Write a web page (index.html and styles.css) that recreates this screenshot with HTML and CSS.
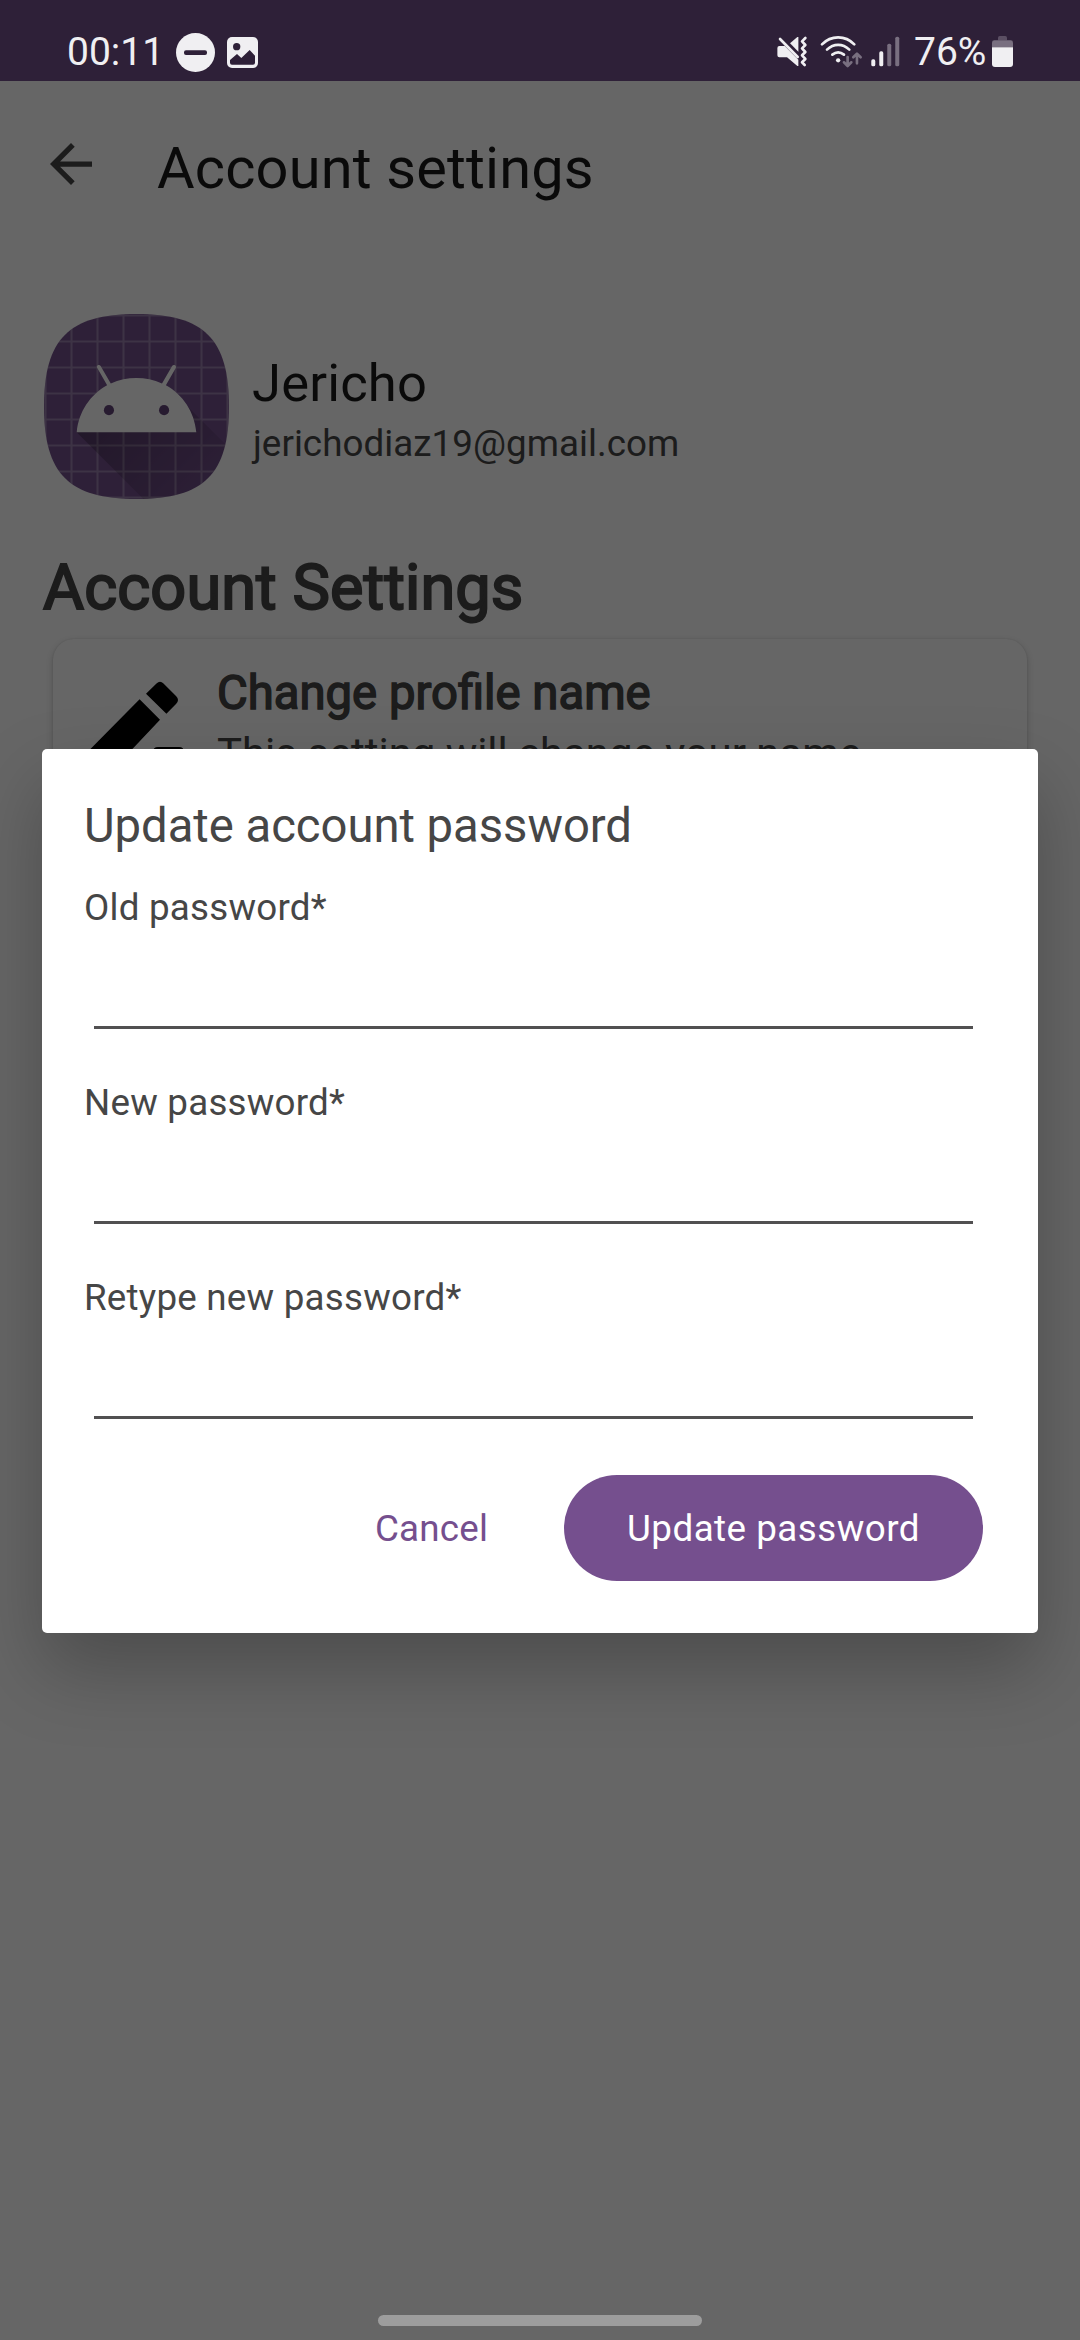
FILE: index.html
```html
<!DOCTYPE html>
<html lang="en">
<head>
<meta charset="utf-8">
<title>Account settings</title>
<link rel="stylesheet" href="styles.css">
</head>
<body>
<div class="phone">
  <header class="status-bar">
    <span class="clock">00:11</span>
    <svg class="icon-dnd" viewBox="0 0 39 39"><circle cx="19.5" cy="19.5" r="19.5" fill="#f0eff2"/><rect x="8" y="17.3" width="23" height="4.6" rx="2" fill="#2e2038"/></svg>
    <svg class="icon-image" viewBox="0 0 93 93"><rect width="93" height="93" rx="15" fill="#f0eff2"/><circle cx="29" cy="29" r="11" fill="#2e2038"/><path d="M9 69L30 51L43 63L68 39L84 56V77Q84 83 78 83H15Q9 83 9 77Z" fill="#2e2038"/></svg>
    <svg class="icons-signal" viewBox="110 105 370 100">
      <g fill="#f0eff2">
        <path d="M117 138H133L174 179V198H171L140 172H117Q111 172 111 166V144Q111 138 117 138Z"/>
        <path d="M149 130L171 111H174V155Z"/>
        <circle cx="293.500" cy="181" r="6.500"/>
        <rect x="393" y="178" width="12" height="21" rx="5"/>
        <rect x="417" y="154" width="12" height="45" rx="5"/>
      </g>
      <g fill="none" stroke="#f0eff2" stroke-linecap="round" stroke-width="8">
        <path d="M119 117L172 171"/>
        <path d="M195 114L185 124L195 135L185 145L195 156L185 166L195 177L185 187L193 195" stroke-linejoin="round"/>
        <path d="M245 133C272 105 315 105 342 133M260 149C280 130 307 130 327 149M276 164C287 155 300 155 311 164"/>
      </g>
      <g fill="#796f80"><rect x="441" y="131" width="12" height="68" rx="5"/><rect x="465" y="110" width="12" height="89" rx="5"/></g>
      <path d="M322 171V197M311 187L322 198L333 187M350 190V162M339 172L350 161L361 172" fill="none" stroke="#796f80" stroke-width="8" stroke-linecap="round" stroke-linejoin="round"/>
    </svg>
    <span class="battery-level">76%</span>
    <svg class="icon-battery" viewBox="0 0 63 93"><path d="M18 5Q18 0 23 0H40Q45 0 45 5V13H18Z" fill="#5b4f63"/><path d="M0 34V20Q0 13 7 13H56Q63 13 63 20V34Z" fill="#796f80"/><path d="M0 34H63V84Q63 93 54 93H9Q0 93 0 84Z" fill="#f0eff2"/></svg>
  </header>

  <main class="screen">
    <div class="app-bar">
      <svg class="icon-back" viewBox="4 4 16 16"><path d="M20 11H7.830L13.420 5.410L12 4L4 12L12 20L13.410 18.590L7.830 13H20Z" fill="#464646"/></svg>
      <h1 class="app-title">Account settings</h1>
    </div>
    <section class="profile">
      <svg class="avatar" viewBox="18.420 18.420 71.150 71.150">
        <defs>
          <clipPath id="squircle"><path d="M18.420 54C18.420 28 28 18.420 54 18.420S89.570 28 89.570 54S80 89.570 54 89.570S18.420 80 18.420 54Z"/></clipPath>
          <linearGradient id="shade" gradientUnits="userSpaceOnUse" x1="42.900" y1="49.600" x2="85.800" y2="92.500"><stop offset="0" stop-opacity=".27"/><stop offset="1" stop-opacity="0"/></linearGradient>
        </defs>
        <g clip-path="url(#squircle)">
          <rect x="18" y="18" width="72" height="72" fill="#73508c"/>
          <path d="M19 18V90M29 18V90M39 18V90M49 18V90M59 18V90M69 18V90M79 18V90M89 18V90M18 19H90M18 29H90M18 39H90M18 49H90M18 59H90M18 69H90M18 79H90M18 89H90" stroke="#fff" stroke-opacity=".28" stroke-width=".8"/>
          <path d="M31 63.928s6.400-11 12.100-13.100c7.200-2.600 26-1.400 26-1.400l38.100 38.100L107 108.928l-32-1Z" fill="url(#shade)"/>
          <path d="M65.300 45.828l3.800-6.600c.2-.4.1-.9-.3-1.100-.4-.2-.9-.1-1.100.3l-3.900 6.700c-6.300-2.800-13.400-2.800-19.700 0l-3.900-6.700c-.2-.4-.7-.5-1.100-.3-.4.2-.5.7-.2 1.100l3.800 6.600C36.200 49.428 31.700 56.028 31 63.928h46c-.7-7.900-5.200-14.500-11.700-18.100Z" fill="#fff"/>
          <circle cx="43.400" cy="55.400" r="1.950" fill="#634478"/><circle cx="64.600" cy="55.400" r="1.950" fill="#634478"/>
        </g>
      </svg>
      <div class="profile-text">
        <div class="profile-name">Jericho</div>
        <div class="profile-email">jerichodiaz19@gmail.com</div>
      </div>
    </section>
    <h2 class="section-title">Account Settings</h2>
    <section class="card">
      <svg class="icon-edit" viewBox="0 0 98 98"><path d="M53.600 20.300L74 40.700L20 98H0V74.500ZM60 14.700L70.500 4.500Q74 1 77.500 4.500L90 17Q94 21 90 25L80.400 34.700ZM67 77V73Q67 68 72 68H93Q98 68 98 73V77Z"/></svg>
      <div class="card-text">
        <h3 class="card-title">Change profile name</h3>
        <p class="card-description">This setting will change your name</p>
      </div>
    </section>
  </main>

  <div class="scrim"></div>
  <form class="dialog">
    <h2 class="dialog-title">Update account password</h2>
    <label class="field">Old password*<input class="field-input" type="password"></label>
    <label class="field">New password*<input class="field-input" type="password"></label>
    <label class="field">Retype new password*<input class="field-input" type="password"></label>
    <div class="actions">
      <button class="button-cancel" type="button">Cancel</button>
      <button class="button-update" type="button">Update password</button>
    </div>
  </form>
  <div class="nav-handle"></div>
</div>
</body>
</html>
```
FILE: styles.css
```css
* { box-sizing: border-box; }
body { margin: 0; font-family: Roboto, sans-serif; color: #464646; }
h1, h2, h3, p { margin: 0; font-weight: 400; }
svg { display: block; flex: none; }

.phone { position: relative; width: 1080px; height: 2340px; overflow: hidden; background: #fefefe; }

.status-bar { position: relative; z-index: 2; display: flex; height: 81px; padding: 33px 67px 0; background: #2e2038; color: #f0eff2; font-size: 39px; line-height: 38px; }
.clock { width: 109px; }
.icon-dnd { width: 39px; height: 39px; }
.icon-image { width: 31px; height: 31px; margin: 4px 0 0 12px; }
.icons-signal { width: 123.3px; height: 33.3px; margin: 2px 14px 0 auto; }
.battery-level { width: 78px; }
.icon-battery { width: 21px; height: 31px; margin-top: 3px; }

.screen { display: flex; flex-direction: column; }
.app-bar { display: flex; height: 233px; padding: 62px 50px 0; gap: 65px; }
.icon-back { width: 42px; height: 42px; }
.app-title { margin-top: -9px; height: 68px; font-size: 57.75px; line-height: 68px; letter-spacing: .15px; color: #1b1b1b; }

.profile { display: flex; height: 185px; padding-left: 44px; gap: 8px; }
.avatar { width: 185px; height: 185px; }
.profile-text { padding: 38px 0 0 15px; }
.profile-name { height: 62px; font-size: 52.5px; line-height: 62px; letter-spacing: .2px; color: #1b1b1b; }
.profile-email { padding-left: 1px; font-size: 36.75px; line-height: 44px; height: 44px; margin-top: 8px; letter-spacing: .05px; }

.section-title { margin: 52px 0 0 43px; height: 74px; font-size: 63px; line-height: 74px; letter-spacing: .1px; -webkit-text-stroke: 2px #464646; }
.card { display: flex; width: 974px; height: 200px; margin: 14px 0 0 53px; padding: 40px 33px 0; border-radius: 21px; background: #fff; box-shadow: 0 3px 7px rgba(0, 0, 0, .2), 0 0 2px rgba(0, 0, 0, .12); }
.icon-edit { width: 98px; height: 98px; }
.card-text { padding-left: 33px; margin-top: -14px; }
.card-title { height: 56px; font-size: 47.25px; line-height: 56px; -webkit-text-stroke: 1.500px #464646; }
.card-description { margin-top: 8px; font-size: 42px; line-height: 50px; letter-spacing: -.05px; }

.scrim { position: absolute; inset: 81px 0 0; background: rgba(0, 0, 0, .6); }

.dialog { position: absolute; left: 42px; top: 749px; width: 996px; height: 884px; padding: 49px 55px 0 42px; border-radius: 5px; background: #fff; box-shadow: 0 36px 76px rgba(0, 0, 0, .25); }
.dialog-title { height: 56px; font-size: 47.25px; line-height: 56px; letter-spacing: -.04px; }
.field { display: flex; flex-direction: column; height: 195px; padding-top: 32px; font-size: 36.75px; line-height: 44px; letter-spacing: .22px; }
.field-input { height: 99px; width: 879px; margin-left: 10px; padding: 0; border: 0; border-bottom: 3px solid #515051; background: none; outline: none; font: inherit; }
.actions { display: flex; justify-content: flex-end; align-items: center; margin-top: 36px; }
.button-cancel, .button-update { padding: 2px 0 0; border: 0; background: none; font: 36.75px/44px Roboto, sans-serif; color: #754f8e; }
.button-cancel { width: 115px; margin-right: 75px; letter-spacing: .2px; }
.button-update { width: 419px; height: 106px; border-radius: 53px; background: #754f8e; color: #fff; letter-spacing: .48px; }

.nav-handle { position: absolute; left: 378px; bottom: 14px; width: 324px; height: 11px; border-radius: 5.500px; background: #9d9d9d; }
```
